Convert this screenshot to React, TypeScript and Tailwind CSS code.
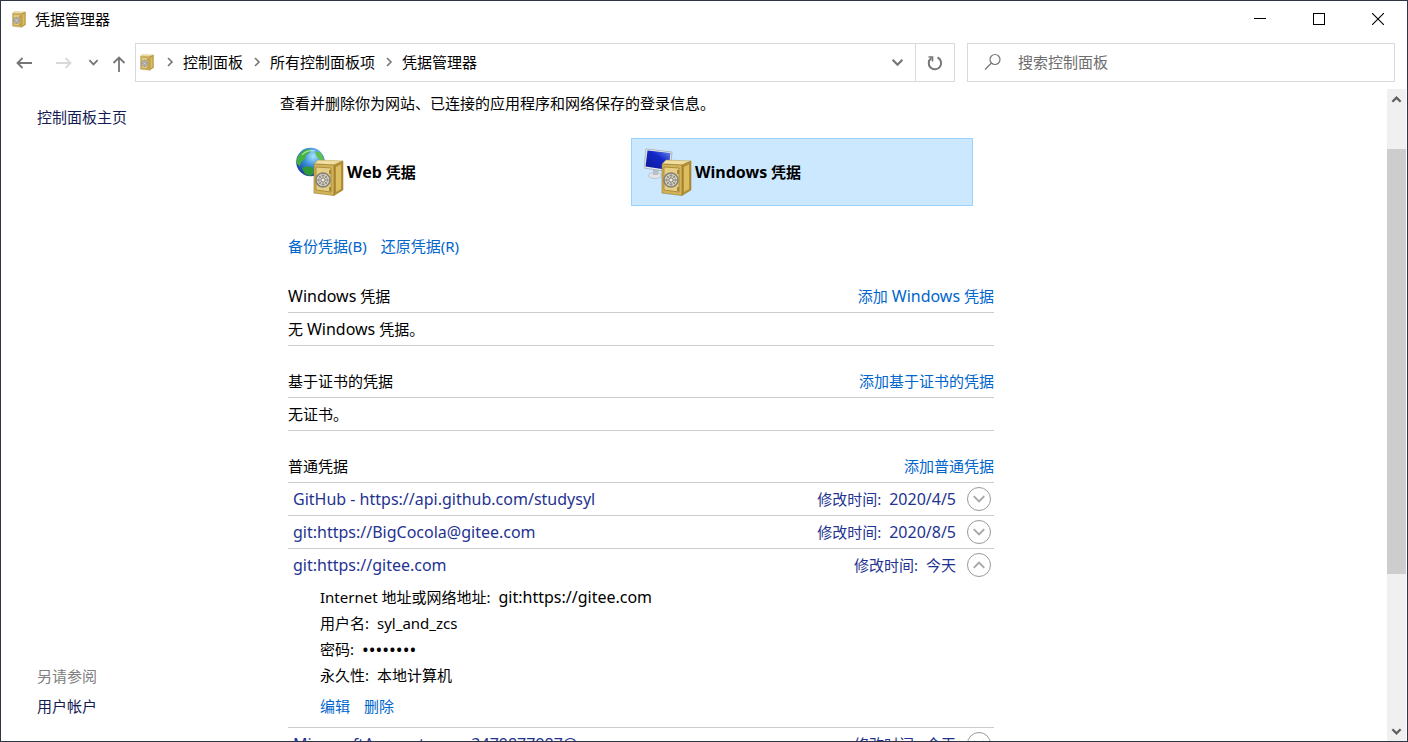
import { useState, type ReactNode } from 'react';

const entries = [
  { id: 1, name: 'GitHub - https://api.github.com/studysyl', date: '2020/4/5' },
  { id: 2, name: 'git:https://BigCocola@gitee.com', date: '2020/8/5' },
  { id: 3, name: 'git:https://gitee.com', date: '今天' },
  { id: 4, name: 'MicrosoftAccount:user=3479877987@qq.com', date: '今天' },
];

function SafeShape() {
  return (
    <g>
      <path d="M18 17 22 13 47 14 38 18Z" fill="#f0dfa0" stroke="#b8983f" strokeWidth=".5" />
      <path d="M38 18 47 14V43L38 48.500Z" fill="#b48f35" stroke="#94752a" strokeWidth=".5" />
      <path d="M40 20 45 17.500V42L40 45Z" fill="#dcbd5f" />
      <path d="M18 17 38 18V48.500L18 46Z" fill="#d3b458" stroke="#94752a" strokeWidth=".6" />
      <path d="M20 20 35 21V45L20 43Z" fill="#e6cf85" stroke="#a08033" strokeWidth=".8" />
      <circle cx="27" cy="33" r="7" fill="#d9d5c8" stroke="#85817a" strokeWidth="1.600" />
      <circle cx="27" cy="33" r="4.500" fill="none" stroke="#a39c88" strokeWidth="1" />
      <path d="M27 26.500V39.500M20.500 33H33.500M22.500 28.500 31.500 37.500M31.500 28.500 22.500 37.500" stroke="#85817a" strokeWidth=".9" />
      <circle cx="27" cy="33" r="2" fill="#eeece4" stroke="#77736b" strokeWidth=".7" />
      <path d="M34 23V27M34 40V44" stroke="#8a6a1e" strokeWidth="1.300" />
    </g>
  );
}

function SafeIcon() {
  return (
    <svg className="h-[17px] w-4 shrink-0" viewBox="16 12 33 38" aria-hidden="true">
      <SafeShape />
    </svg>
  );
}

function WebSafeIcon() {
  return (
    <svg className="size-[50px] shrink-0" viewBox="0 0 50 50" aria-hidden="true">
      <defs>
        <radialGradient id="globe" cx=".6" cy=".3" r=".75">
          <stop offset="0" stopColor="#a9e4fb" />
          <stop offset=".45" stopColor="#3b8fdc" />
          <stop offset="1" stopColor="#143a96" />
        </radialGradient>
      </defs>
      <circle cx="14.500" cy="15" r="14.300" fill="url(#globe)" />
      <path d="M3 8C6 4 10 2 13 2L15 4 12 7 10 8 9 12 5 15 4 19 1 17C0 14 1 11 3 8Z" fill="#45b33a" />
      <path d="M19 4 25 6 28 12 26 14 22 11 20 8Z" fill="#5cc04a" />
      <path d="M6 21 12 19 17 21 18 26 14 29 9 27Z" fill="#2f9a35" />
      <path d="M6 8C9 4 15 3 19 4" stroke="#e4fbff" strokeWidth="1.200" opacity=".6" fill="none" />
      <SafeShape />
    </svg>
  );
}

function PcSafeIcon() {
  return (
    <svg className="size-[50px] shrink-0" viewBox="0 0 50 50" aria-hidden="true">
      <defs>
        <linearGradient id="screen" x1="0" y1="1" x2="1" y2="0">
          <stop offset="0" stopColor="#0a1796" />
          <stop offset=".6" stopColor="#1428c8" />
          <stop offset="1" stopColor="#6f8cf0" />
        </linearGradient>
      </defs>
      <ellipse cx="11" cy="28.500" rx="6.500" ry="3" fill="#e2e5e8" stroke="#aab0b6" strokeWidth=".6" />
      <path d="M9 21 15 22 14 28H9Z" fill="#b9bfc5" />
      <path d="M2 2 28 5 26 25 0 21Z" fill="#e8ebee" stroke="#9aa2aa" strokeWidth=".7" />
      <path d="M3.500 3.500 26.500 6 24.500 23 1.500 19.500Z" fill="url(#screen)" />
      <SafeShape />
    </svg>
  );
}

function Chevron({ className, d, width = 2 }: { className: string; d: string; width?: number }) {
  return (
    <svg className={className} viewBox="0 0 12 12" fill="none" stroke="currentColor" strokeWidth={width} aria-hidden="true">
      <path d={d} />
    </svg>
  );
}

const DOWN = 'M1.500 3.500 6 8 10.500 3.500';
const UP = 'M1.500 8.500 6 4 10.500 8.500';
const RIGHT = 'M4 2 8 6 4 10';

function TitleBar() {
  return (
    <header className="flex h-9 shrink-0 items-center pl-[10px]">
      <SafeIcon />
      <h1 className="ml-2 flex-1">凭据管理器</h1>
      <button aria-label="最小化" className="flex h-full w-[59px] items-center justify-center">
        <svg width="12" height="12" stroke="#000" shapeRendering="crispEdges"><path d="M0 5.500H12" /></svg>
      </button>
      <button aria-label="最大化" className="flex h-full w-[59px] items-center justify-center">
        <svg width="12" height="12" stroke="#000" fill="none" shapeRendering="crispEdges"><path d="M.5 .5H11.500V11.500H.5Z" /></svg>
      </button>
      <button aria-label="关闭" className="flex h-full w-[59px] items-center justify-center">
        <svg width="12" height="12" stroke="#000" strokeWidth="1.100"><path d="M0 0 12 12M12 0 0 12" /></svg>
      </button>
    </header>
  );
}

function NavBar() {
  return (
    <nav className="mt-[6px] flex h-[39px] shrink-0 items-stretch pr-3">
      <div className="flex w-[134px] items-center pl-[15px] text-[#767676]">
        <button aria-label="后退">
          <svg width="16" height="14" fill="none" stroke="currentColor" strokeWidth="1.800"><path d="M16 7H1.500M6.500 2 1.500 7 6.500 12" /></svg>
        </button>
        <button aria-label="前进" className="ml-6 text-[#d9d9d9]" disabled>
          <svg width="16" height="14" fill="none" stroke="currentColor" strokeWidth="1.800"><path d="M0 7H14.500M9.500 2 14.500 7 9.500 12" /></svg>
        </button>
        <button aria-label="最近浏览的位置" className="ml-4">
          <Chevron className="size-[11px]" d={DOWN} />
        </button>
        <button aria-label="上移" className="ml-[13px] mt-[2px]">
          <svg width="14" height="16" fill="none" stroke="currentColor" strokeWidth="1.800"><path d="M7 16V1.500M1.500 7 7 1.500 12.500 7" /></svg>
        </button>
      </div>
      <div className="flex flex-1 border border-[#d9d9d9]">
        <div className="flex flex-1 items-center pb-px pl-[3px]">
          <SafeIcon />
          <Chevron className="ml-[9px] size-3 text-[#767676]" d={RIGHT} width={1.6} />
          <a href="#panel" className="ml-[7px]">控制面板</a>
          <Chevron className="ml-2 size-3 text-[#767676]" d={RIGHT} width={1.6} />
          <a href="#all" className="ml-[7px]">所有控制面板项</a>
          <Chevron className="ml-2 size-3 text-[#767676]" d={RIGHT} width={1.6} />
          <a href="#credentials" className="ml-[7px]">凭据管理器</a>
        </div>
        <button aria-label="以前的位置" className="flex w-9 items-center justify-center text-[#767676]">
          <Chevron className="size-[13px]" d={DOWN} />
        </button>
        <button aria-label="刷新" className="flex w-[39px] items-center justify-center border-l border-[#d9d9d9] text-[#767676]">
          <svg width="16" height="16" fill="none" stroke="currentColor" strokeWidth="2">
            <path d="M10.500 2.500A6.200 6.200 0 1 1 4.500 3" />
            <path d="M1.500 2H5.500V6.500" strokeWidth="1.600" />
          </svg>
        </button>
      </div>
      <label className="ml-3 flex w-[428px] items-center border border-[#d9d9d9] pb-px pl-4">
        <svg width="18" height="18" fill="none" stroke="#767676" strokeWidth="1.200" aria-hidden="true">
          <circle cx="11" cy="6.500" r="5" />
          <path d="M7.500 10 1 16.500" />
        </svg>
        <input type="search" aria-label="搜索控制面板" placeholder="搜索控制面板" className="ml-4 min-w-0 flex-1 outline-none placeholder:text-[#6d6d6d]" />
      </label>
    </nav>
  );
}

function Section({ title, action, children }: { title: ReactNode; action: ReactNode; children: ReactNode }) {
  return (
    <section className="mb-[19px]">
      <div className="flex h-[33px] items-center justify-between border-b border-[#cccccc]">
        <h2>{title}</h2>
        <a href="#add" className="text-[#0066cc]">{action}</a>
      </div>
      {children}
    </section>
  );
}

function WindowsWord() {
  return <span className="text-base leading-5">Windows</span>;
}

function EntryDetails() {
  return (
    <div className="pt-[3px] pb-[11px] pl-8">
      <dl className="leading-[26px]">
        <div className="flex h-[26px] items-baseline gap-2">
          <dt>Internet 地址或网络地址:</dt>
          <dd className="text-base leading-[26px]">git:https://gitee.com</dd>
        </div>
        <div className="flex h-[26px] items-baseline gap-2"><dt>用户名:</dt><dd>syl_and_zcs</dd></div>
        <div className="flex h-[26px] items-center gap-2">
          <dt>密码:</dt>
          <dd className="text-lg leading-[26px]">••••••••</dd>
        </div>
        <div className="flex h-[26px] items-baseline gap-2"><dt>永久性:</dt><dd>本地计算机</dd></div>
      </dl>
      <div className="mt-2 flex gap-[14px] text-[#0066cc]">
        <a href="#edit">编辑</a>
        <a href="#remove">删除</a>
      </div>
    </div>
  );
}

function Scrollbar() {
  return (
    <div className="mr-px flex w-[19px] shrink-0 flex-col bg-[#f0f0f0] text-[#606060]">
      <button aria-label="向上滚动" className="flex h-5 items-center justify-center">
        <Chevron className="size-[11px]" d={UP} width={2.5} />
      </button>
      <div className="grow-[40]" />
      <div className="grow-[425] bg-[#cdcdcd]" />
      <div className="grow-[147]" />
      <button aria-label="向下滚动" className="flex h-5 items-center justify-center">
        <Chevron className="size-[11px]" d={DOWN} width={2.5} />
      </button>
    </div>
  );
}

export default function App() {
  const [openId, setOpenId] = useState<number | null>(3);

  return (
    <div className="flex h-screen flex-col overflow-hidden border border-[#2f3545] bg-white font-['Noto_Sans','Noto_Sans_CJK_SC',sans-serif] text-[15px] leading-5 text-black">
      <TitleBar />
      <NavBar />
      <div className="mt-[7px] flex min-h-0 flex-1">
        <aside className="flex w-[279px] shrink-0 flex-col justify-between pt-[18px] pb-[25px] pl-9 text-[#151c55]">
          <a href="#home">控制面板主页</a>
          <div className="flex flex-col gap-[10px]">
            <span className="text-[#808080]">另请参阅</span>
            <a href="#accounts">用户帐户</a>
          </div>
        </aside>

        <main className="min-w-0 flex-1 overflow-hidden">
          <p className="pt-1">查看并删除你为网站、已连接的应用程序和网络保存的登录信息。</p>

          <div className="mt-[25px] ml-[3px] flex gap-[6px] font-bold">
            <button className="flex h-[68px] w-[342px] items-center border border-transparent pb-px pl-3">
              <WebSafeIcon />
              <span className="ml-px"><span className="text-base leading-5">Web</span> 凭据</span>
            </button>
            <button className="flex h-[68px] w-[342px] items-center border border-[#99d1ff] bg-[#cce8ff] pb-px pl-3">
              <PcSafeIcon />
              <span className="ml-px"><WindowsWord /> 凭据</span>
            </button>
          </div>

          <div className="ml-2 max-w-[706px]">
            <div className="mt-[30px] mb-6 flex gap-[14px] text-[#0066cc]">
              <a href="#backup">备份凭据(B)</a>
              <a href="#restore">还原凭据(R)</a>
            </div>

            <Section title={<><WindowsWord /> 凭据</>} action={<>添加 <WindowsWord /> 凭据</>}>
              <div className="flex h-[33px] items-center border-b border-[#cccccc]">
                <p>无 <WindowsWord /> 凭据。</p>
              </div>
            </Section>
            <Section title="基于证书的凭据" action="添加基于证书的凭据">
              <div className="flex h-[33px] items-center border-b border-[#cccccc]">
                <p>无证书。</p>
              </div>
            </Section>
            <Section title="普通凭据" action="添加普通凭据">
              {entries.map((entry) => (
                <div key={entry.id} className="border-b border-[#cccccc]">
                  <button
                    className="flex h-8 w-full items-center pr-[3px] pl-[5px] text-[#1f3391]"
                    aria-expanded={openId === entry.id}
                    onClick={() => setOpenId(openId === entry.id ? null : entry.id)}
                  >
                    <span className="flex-1 text-left text-base leading-5">{entry.name}</span>
                    <span className="flex items-baseline gap-2">
                      <span>修改时间:</span>
                      <span className={/\d/.test(entry.date) ? 'text-base leading-5' : ''}>{entry.date}</span>
                    </span>
                    <span className="ml-[11px] flex size-6 items-center justify-center rounded-full border border-[#999999] text-[#a6a6a6]">
                      <Chevron className="size-[14px]" d={openId === entry.id ? UP : DOWN} width={1.6} />
                    </span>
                  </button>
                  {openId === entry.id && <EntryDetails />}
                </div>
              ))}
            </Section>
          </div>
        </main>

        <Scrollbar />
      </div>
    </div>
  );
}
